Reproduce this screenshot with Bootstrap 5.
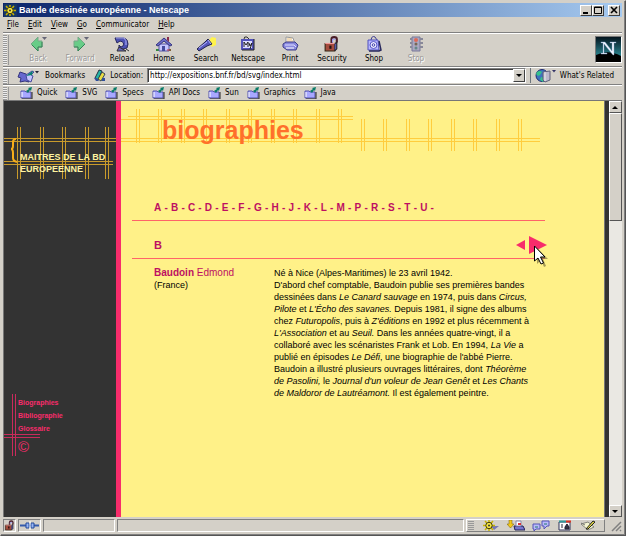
<!DOCTYPE html>
<html lang="fr">
<head>
<meta charset="utf-8">
<title>Bande dessinée européenne - Netscape</title>
<meta name="viewport" content="width=device-width, initial-scale=1">
<link href="https://cdn.jsdelivr.net/npm/bootstrap@5.3.0/dist/css/bootstrap.min.css" rel="stylesheet">
<style>
:root{--face:#d4d0c8;--shade:#808080;--pink:#f72c6b;--plum:#bd0f62;--paper:#fff188;--coal:#333}
body{font-family:"Liberation Sans",Arial,sans-serif;background:var(--face);color:#000;font-size:10px;line-height:12px;border:1px solid;border-color:#d4d0c8 #555 #555 #d4d0c8}
.app-frame{padding:2px;border-right:1px solid var(--shade);border-bottom:1px solid var(--shade);min-width:0}
svg{display:block;flex:none}
a{text-decoration:none}
button,input{font:inherit;color:inherit}
.plain{border:0;background:none;padding:0}
.ui{font-family:"DejaVu Sans Condensed","DejaVu Sans",Tahoma,sans-serif;font-size:8px;line-height:12px}
.title-strip{height:14px;background:linear-gradient(90deg,#0a246a,#a6caf0);color:#fff;padding:0 2px 0 1px}
.title-strip h1{font-family:"Liberation Sans",Arial,sans-serif;font-size:9px;line-height:14px;font-weight:700;padding-left:2px}
.win-btn{width:12px;height:11px;background:var(--face);border:1px solid;border-color:#fff #404040 #404040 #fff;padding:0;display:flex;align-items:center;justify-content:center}
.menu-strip{height:15px;padding-left:4px;gap:9px}
.strip{border-top:1px solid var(--shade);box-shadow:inset 0 1px #fff}
.grip{width:6px;align-self:stretch;margin-top:2px;border-right:1px solid #999;background:repeating-linear-gradient(#999 0 1px,#eee 1px 2px);background-size:4px auto;background-repeat:repeat-y;flex:none}
.tools{height:34px;padding-bottom:1px}
.tool{width:42px;padding-top:3px;display:flex;flex-direction:column;align-items:center}
.tool svg{margin-bottom:1px}
.off{color:#999;text-shadow:1px 1px #fff}
.brand{width:27px;height:27px;border:1px solid #777;border-right-color:#fff;border-bottom-color:#fff;margin-top:3px}
.place{height:18px}
.url{height:15px;border:1px solid var(--shade);border-right-color:#fff;border-bottom-color:#fff;box-shadow:inset 1px 1px #404040;background:#fff;min-width:0}
.url input{border:0;outline:0;background:none;padding:0 0 0 2px;height:13px;min-width:0}
.links{height:16px}
.links nav{gap:8px;padding-left:7px}
.view{border-top:1px solid #777;border-left:1px solid #777;min-height:0}
.side{width:112px;background:var(--coal);color:#fff4a0}
.side-title{font-size:9px;line-height:12px;font-weight:700;padding:50px 0 0 16px;margin:0;white-space:nowrap}
.decor{position:absolute;left:0;top:0}
.side-menu{width:112px;padding:2px 0 0 14px;margin-top:219px;color:var(--pink);font-size:7px;font-weight:700}
.side-menu a{display:block;color:inherit;line-height:13px}
.side-menu .copy{font-size:15px;line-height:24px;font-weight:400}
.rail{width:5px;background:var(--pink);flex:none}
.paper{background:var(--paper);min-width:0}
.page-title{font-size:25px;line-height:28px;font-weight:700;color:#ff702b;padding:15px 0 0 41px;margin:0}
.sheet{padding:54px 59px 0 11px}
.letters{padding:4px 0 0 22px;max-width:302px;height:22px;font-size:10px;line-height:12px;font-weight:700;color:var(--plum)}
.letters a{color:inherit}
.initial{height:39px;padding:0 0 0 22px;border-top:1px solid #ff6468;border-bottom:1px solid #ff6468;color:var(--plum)}
.initial h3{font-size:11px;line-height:14px;font-weight:700;margin:10px 0 0}
.arrows{gap:3px;margin-right:-2px;padding-top:10px}
.pointer{position:absolute;right:-3px;top:24px}
.entry{padding:8px 0 0 22px;font-size:9px;line-height:12px}
.who{width:120px;flex:none}
.who h4{font-size:10px;line-height:12px;font-weight:700;color:var(--plum);margin:0}
.who h4 span{font-weight:400}
.bio{white-space:nowrap;margin:0}
.edge{width:5px;background:var(--coal);border-left:1px solid #777;flex:none}
.bar{width:13px;background:#eae8e3;flex:none}
.bar-btn,.thumb{background:var(--face);border:1px solid;border-color:#fff #555 #555 #fff;width:13px;height:12px;padding:0;display:flex;align-items:center;justify-content:center}
.thumb{height:108px}
.status{height:15px;padding-top:2px;gap:2px}
.well{border:1px solid;border-color:var(--shade) #fff #fff var(--shade);height:13px}
.w-lock{width:13px}.w-plug{width:23px}.w-prog{width:72px}
.dock{width:139px;border:1px solid;border-color:#fff var(--shade) var(--shade) #fff;height:13px}
</style>
<script src="https://cdn.jsdelivr.net/npm/bootstrap@5.3.0/dist/js/bootstrap.bundle.min.js"></script>
</head>
<body class="vh-100 overflow-hidden d-flex">
<svg width="0" height="0" class="position-absolute" aria-hidden="true">
<defs>
<symbol id="folder" viewBox="0 0 13 12"><path d="M1 4h4l1 1h5v6H1z" fill="#a8a8ff" stroke="#5252ad"/><path d="M2 5v5" stroke="#fff"/><path d="M12 5v7H2" stroke="#222" fill="none"/><path d="M6 4 9 2 8 1l4-1-1 4-1-1-2 3z" fill="#087b68"/></symbol>
<symbol id="wheel" viewBox="0 0 13 11"><path d="M6 0v11M0 5.500h12M2 1l8 9M10 1 2 10" stroke="#c9b400" stroke-width="1.500"/><circle cx="6" cy="5.500" r="3.200" fill="#f5e642" stroke="#403c08"/><circle cx="6" cy="5.500" r="1" fill="#333"/></symbol>
<symbol id="lock" viewBox="0 0 16 15"><path d="M8 7V3q0-2 2.500-2T13 3v3" fill="none" stroke="#4a1d28" stroke-width="2"/><path d="M9 6V3h3" fill="none" stroke="#9a9aef"/><path d="M2 7h9v7H2z" fill="#a54b3c" stroke="#321"/><path d="m11 7 2-1v6l-2 2" fill="#5656a8" stroke="#222"/><path d="M6 9h2v3H6z" fill="#211"/><path d="M2 7h9" stroke="#e99"/></symbol>
</defs>
</svg>
<div class="app-frame d-flex flex-column flex-fill">
<header class="ui">
<div class="title-strip d-flex align-items-center">
<svg width="13" height="13"><rect width="13" height="13" fill="#163765"/><use href="#wheel" y="1" width="13" height="11"/></svg>
<h1 class="mb-0 flex-fill">Bande dessinée européenne - Netscape</h1>
<button class="win-btn" aria-label="Réduire"><svg width="8" height="8"><path d="M1 6h5v2H1z"/></svg></button>
<button class="win-btn" aria-label="Agrandir"><svg width="8" height="8"><path d="M.500 1h7v6.500h-7zM0 1.500h8" fill="none" stroke="#000"/></svg></button>
<button class="win-btn ms-1" aria-label="Fermer"><svg width="8" height="8"><path d="m1 1 6 6M7 1 1 7" stroke="#000" stroke-width="1.600"/></svg></button>
</div>
<nav class="menu-strip d-flex align-items-center">
<button class="plain"><u>F</u>ile</button><button class="plain"><u>E</u>dit</button><button class="plain"><u>V</u>iew</button><button class="plain"><u>G</u>o</button><button class="plain"><u>C</u>ommunicator</button><button class="plain"><u>H</u>elp</button>
</nav>
<div class="strip tools d-flex">
<span class="grip"></span><span class="ps-1 ms-1"></span>
<button class="plain tool off"><svg width="18" height="16"><path d="m2 8 7-7v4h4v6H9v4z" fill="#68cc87" stroke="#79a889"/><path d="m3 9 6 6v-4h4V6" fill="none" stroke="#348357"/><path d="M13 1h5l-2.500 3z" fill="#667"/></svg>Back</button>
<button class="plain tool off"><svg width="18" height="16"><path d="M14 8 7 1v4H3v6h4v4z" fill="#68cc87" stroke="#79a889"/><path d="m14 8-7 7v-4H3" fill="none" stroke="#348357"/><path d="M13 1h5l-2.500 3z" fill="#667"/></svg>Forward</button>
<button class="plain tool"><svg width="18" height="16"><path d="M2 2h9q4 1 4 6l-1 4-4 1-4-1V9l2 2 2-1q2-4-3-5L4 7z" fill="#4d52b4" stroke="#27275f"/><path d="M3 2h8q3 2 2 7" stroke="#b2b2fa" fill="none"/><path d="m4 15 2-4 7 4zM13 13l3 2" stroke="#333" fill="#6666bd"/></svg>Reload</button>
<button class="plain tool"><svg width="18" height="16"><path d="M1 14h15" stroke="#308b38" stroke-width="2"/><path d="M4 8h10v7H4z" fill="#c6c6ff" stroke="#5656a4"/><path d="m1 9 8-7 8 7-2 1-6-5-6 5z" fill="#6d6dcc" stroke="#35357f"/><path d="M12 1h2v5l-2-2z" fill="#8a2d4c"/><path d="M7 10h3v5H7z" fill="#444b9c"/><path d="M12 14h4" stroke="#c33"/></svg>Home</button>
<button class="plain tool"><svg width="20" height="16"><path d="m13 4 3-3 4 1v7l-4 2-2-3z" fill="#fff34d"/><path d="m1 13 8-7 3-3 4 5-5 2-8 5z" fill="#5757bd" stroke="#23234f"/><path d="m3 12 8-6M12 4l3 4" stroke="#b5b5ff"/></svg>Search</button>
<button class="plain tool"><svg width="18" height="16"><path d="M5 3q0-3 3-2l2 2" fill="none" stroke="#333"/><path d="M3 4h11v9H3z" fill="#dcdcff" stroke="#5353bb" stroke-width="2"/><path d="M15 3v11H3" fill="none" stroke="#222"/><path d="M5 11V6l2 3 2-3v5M10 7l1 3 2-3-2 6" fill="none" stroke="#222"/></svg>Netscape</button>
<button class="plain tool"><svg width="18" height="16"><path d="M5 8V1l7 1 2 6z" fill="#fff" stroke="#999"/><path d="M6 3h5M6 5h6" stroke="#e6ba72"/><path d="m2 8 3-2h9l3 3-2 5H6l-4-3z" fill="#8989df" stroke="#3d3d88"/><path d="M4 9h9l2 2" fill="none" stroke="#ddf"/><path d="M5 12h8" stroke="#fff"/></svg>Print</button>
<button class="plain tool"><svg width="18" height="16"><use href="#lock" width="17" height="16"/></svg>Security</button>
<button class="plain tool"><svg width="18" height="16"><path d="M6 4q1-5 4-3l2 3" fill="none" stroke="#3d3d91"/><path d="M3 4h10l1 10H3z" fill="#b7b7ff" stroke="#5050bd"/><path d="M14 5l2 9-2 1H4" fill="none" stroke="#29295e" stroke-width="1.500"/><circle cx="8.500" cy="9" r="3.500" fill="#eef" stroke="#5555c5"/><circle cx="8.500" cy="9" r="1.300" fill="none" stroke="#4444aa"/></svg>Shop</button>
<button class="plain tool off"><svg width="18" height="16"><path d="M5 1h8v14H5z" fill="#aaa8c0" stroke="#777799"/><path d="M3 3h2M3 7h2M3 11h2M13 3h3M13 7h3M13 11h3" stroke="#888899" stroke-width="2"/><circle cx="9" cy="4" r="2" fill="#df6957"/><circle cx="9" cy="8" r="1.500" fill="#765"/><circle cx="9" cy="12" r="1.500" fill="#688"/></svg>Stop</button>
<svg class="brand ms-auto" viewBox="0 0 25 25" role="img" aria-label="Netscape N"><defs><linearGradient id="sky" x2="0" y2="1"><stop stop-color="#04141e"/><stop offset=".7" stop-color="#287e89"/></linearGradient></defs><rect width="25" height="25" fill="url(#sky)"/><path d="M0 18q12-6 25 1v6H0z" fill="#000"/><path d="M5 5h4l7 9V6h-2V5h6v1h-2v12h-1L8 7v9h3v1H5v-1h2V6H5z" fill="#f1f5ff" stroke="#789abf" stroke-width=".4"/></svg>
</div>
<div class="strip place d-flex align-items-center">
<span class="grip"></span>
<svg class="ms-2" width="24" height="14"><path d="m3 3 6 2 3 2v6l-4-1-5 1 1-4-3-1z" fill="#6767cf" stroke="#34347d"/><path d="m9 6 6-4 2 1-3 3 2 1-2 6-4-2z" fill="#c4c4ff" stroke="#484a9c"/><path d="m9 7 5-4 2-1-1 4z" fill="#087f70"/><path d="M18 2h4l-2 2.500z" fill="#223"/></svg>
<button class="plain ms-1">Bookmarks</button>
<svg class="ms-2" width="13" height="13"><path d="m2 9 4-8 3 1-4 9z" fill="#23b4a5" stroke="#234"/><path d="m5 10 4-7 3 2-4 7z" fill="#e8dc42" stroke="#345"/><path d="M1 9h3l2 3H3zM9 9h3v3H9z" fill="#315099"/></svg>
<label for="loc" class="ms-1 me-1">Location:</label>
<div class="url d-flex flex-fill"><input id="loc" class="flex-fill" value="http://expositions.bnf.fr/bd/svg/index.html"><button class="win-btn h-100" aria-label="Historique"><svg width="7" height="5"><path d="M1 1h6L4 4z"/></svg></button></div>
<span class="border-start border-secondary ms-1" style="height:15px"></span>
<svg class="ms-1" width="21" height="14"><circle cx="7" cy="6.500" r="6" fill="#3c73be" stroke="#202b70"/><path d="M2 3q3-2 5 0L5 6 3 7 1 5zM6 8l4 1-2 4-3-2z" fill="#35c08c"/><path d="m8 3 7-1v9l-5 2-2-2z" fill="#bbb9cc" stroke="#60607c"/><path d="M10 3v9" stroke="#eee"/><path d="M17 1h4l-2 2.500z" fill="#336"/></svg>
<button class="plain ms-1 me-2">What's Related</button>
</div>
<div class="strip links d-flex align-items-center">
<span class="grip"></span>
<nav class="d-flex ms-1">
<button class="plain d-flex gap-1"><svg width="13" height="12"><use href="#folder"/></svg>Quick</button>
<button class="plain d-flex gap-1"><svg width="13" height="12"><use href="#folder"/></svg>SVG</button>
<button class="plain d-flex gap-1"><svg width="13" height="12"><use href="#folder"/></svg>Specs</button>
<button class="plain d-flex gap-1"><svg width="13" height="12"><use href="#folder"/></svg>API Docs</button>
<button class="plain d-flex gap-1"><svg width="13" height="12"><use href="#folder"/></svg>Sun</button>
<button class="plain d-flex gap-1"><svg width="13" height="12"><use href="#folder"/></svg>Graphics</button>
<button class="plain d-flex gap-1"><svg width="13" height="12"><use href="#folder"/></svg>Java</button>
</nav>
</div>
</header>
<div class="view d-flex flex-fill">
<aside class="side position-relative flex-shrink-0">
<svg class="decor" width="112" height="84" fill="none" stroke="#c99b2b"><path d="M13.500 26v52M16.500 26v52M36.500 26v52M39.500 26v52M58.500 26v52M61.500 26v52M81.500 26v52M84.500 26v52M101.500 26v52M104.500 26v52M0 37.500h112M0 40.500h112M0 60.500h109M0 63.500h109"/><path d="M12 38q-3 0-3 3v4q0 3-2 3 2 0 2 4v5q0 3 4 4" stroke="#f7ad19" stroke-width="2"/></svg>
<h2 class="side-title position-relative">MAITRES DE LA BD<br>EUROPEENNE</h2>
<nav class="side-menu position-relative">
<svg class="decor" width="40" height="64" fill="none" stroke="#c92b5c"><path d="M8.500 0v62M11.500 0v62M0 40.500h36M0 43.500h36"/></svg>
<a href="#">Biographies</a><a href="#">Bibliographie</a><a href="#">Glossaire</a><a href="#" class="copy">©</a>
</nav>
</aside>
<div class="rail"></div>
<main class="paper position-relative flex-fill">
<svg class="decor" width="424" height="56" fill="none" stroke="#ffcd3e"><path d="M15.500 8v34M18.500 8v34M37.500 8v34M40.500 8v34M60.500 8v34M63.500 8v34M82.500 8v34M85.500 8v34M105.500 8v34M108.500 8v34M127.500 8v34M130.500 8v34M150.500 8v34M153.500 8v34M172.500 8v34M175.500 8v34M195.500 8v34M198.500 8v34M217.500 8v34M220.500 8v34M240.500 18v32M243.500 18v32M262.500 18v32M265.500 18v32M285.500 18v32M288.500 18v32M307.500 18v32M310.500 18v32M330.500 18v32M333.500 18v32M352.500 18v32M355.500 18v32M375.500 18v32M378.500 18v32M397.500 18v32M400.500 18v32M7 15.500h225M0 18.500h232M0 37.500h419M0 40.500h419"/></svg>
<h2 class="page-title position-relative">biographies</h2>
<div class="sheet">
<nav class="letters d-flex justify-content-between"><a href="#">A</a>-<a href="#">B</a>-<a href="#">C</a>-<a href="#">D</a>-<a href="#">E</a>-<a href="#">F</a>-<a href="#">G</a>-<a href="#">H</a>-<a href="#">J</a>-<a href="#">K</a>-<a href="#">L</a>-<a href="#">M</a>-<a href="#">P</a>-<a href="#">R</a>-<a href="#">S</a>-<a href="#">T</a>-<a href="#">U</a>-</nav>
<div class="initial d-flex align-items-center position-relative">
<h3 class="flex-fill">B</h3>
<div class="arrows d-flex align-items-center">
<button class="plain" aria-label="Précédent"><svg width="10" height="10"><path d="M0 5 9 0v10z" fill="#f72c6b"/></svg></button>
<button class="plain" aria-label="Suivant"><svg width="18" height="18"><path d="M0 0v18l18-9z" fill="#f72c6b"/></svg></button>
</div>
<svg class="pointer" width="14" height="22"><path d="M3 3v16l4-4 3 7 2-1-3-7h5z" fill="#6b6335" opacity=".6"/><path d="M.500 1v15l3.500-3 3 6 2.500-1-3-6H11z" fill="#fff" stroke="#000"/></svg>
</div>
<article class="entry d-flex">
<div class="who"><h4>Baudoin <span>Edmond</span></h4>(France)</div>
<p class="bio">Né à Nice (Alpes-Maritimes) le 23 avril 1942.<br>D'abord chef comptable, Baudoin publie ses premières bandes<br>dessinées dans <i>Le Canard sauvage</i> en 1974, puis dans <i>Circus,<br>Pilote</i> et <i>L'Écho des savanes.</i> Depuis 1981, il signe des albums<br>chez <i>Futuropolis</i>, puis à <i>Z'éditions</i> en 1992 et plus récemment à<br><i>L'Association</i> et au <i>Seuil.</i> Dans les années quatre-vingt, il a<br>collaboré avec les scénaristes Frank et Lob. En 1994, <i>La Vie</i> a<br>publié en épisodes <i>Le Défi</i>, une biographie de l'abbé Pierre.<br>Baudoin a illustré plusieurs ouvrages littéraires, dont <i>Théorème<br>de Pasolini,</i> le <i>Journal d'un voleur de Jean Genêt</i> et <i>Les Chants<br>de Maldoror de Lautréamont.</i> Il est également peintre.</p>
</article>
</div>
</main>
<div class="edge"></div>
<div class="bar d-flex flex-column">
<button class="bar-btn" aria-label="Monter"><svg width="7" height="5"><path d="M0 4h6L3 1z"/></svg></button>
<div class="thumb"></div>
<button class="bar-btn mt-auto" aria-label="Descendre"><svg width="7" height="5"><path d="M0 1h6L3 4z"/></svg></button>
</div>
</div>
<footer class="status d-flex align-items-center">
<span class="well w-lock"><svg width="11" height="11"><use href="#lock" width="11" height="11"/></svg></span>
<span class="well w-plug"><svg width="21" height="11"><path d="M1 5.500h19" stroke="#345bac" stroke-width="2"/><path d="M7 3h3v5H7zM12 3h3v5h-3z" fill="#98b5f4" stroke="#234b9b"/><path d="M11 1v9" stroke="#fff"/></svg></span>
<span class="well w-prog"></span>
<span class="well flex-fill"></span>
<div class="dock d-flex align-items-center justify-content-between pe-2 me-1">
<svg width="8" height="11"><path d="M1 1.500h6M1 3.500h6M1 5.500h6M1 7.500h6M1 9.500h6" stroke="#999"/></svg>
<svg width="16" height="11"><path d="M8 6h8l-5 4z" fill="#7777b5"/><use href="#wheel" width="13" height="11"/></svg>
<svg width="18" height="11"><path d="M2 0h3v4h2L3.500 8 0 4h2z" fill="#f2c91a" stroke="#765c08" stroke-width=".5"/><path d="M7 6h9l2 4H8z" fill="#7777cf" stroke="#222254"/><path d="M9 1h5v5H9z" fill="#fff" stroke="#88a"/><path d="M11 4h3" stroke="#d33" stroke-width="2"/></svg>
<svg width="18" height="11"><path d="M1 4h7v5H4l-2 2V9H1zM10 1h7v5h-2l-3 3V6h-2z" fill="#b9b9fa" stroke="#5555b7"/><path d="M3 7h3M12 4h3" stroke="#257b72"/></svg>
<svg width="14" height="11"><path d="M1 2h11v8H1z" fill="#fff" stroke="#31325b"/><path d="M1 1.500h7" stroke="#399" stroke-width="2"/><path d="M8 1.500h5" stroke="#d32" stroke-width="2"/><path d="M7 9V7l2-3 2 3v2zM3 5h2M3 7h2" stroke="#223" fill="#334"/></svg>
<svg width="16" height="11"><path d="m1 4 7-2 6 5-6 3z" fill="#f5f5d2" stroke="#84847c"/><path d="m6 9 7-8 2 1-7 7z" fill="#e3d844" stroke="#222"/><path d="m1 3 4 2" stroke="#777"/></svg>
</div>
<svg width="11" height="12"><path d="M1 11 10 2M5 11l5-5M9 11l1-1" stroke="#808080" stroke-width="1.500"/></svg>
</footer>
</div>
</body>
</html>
